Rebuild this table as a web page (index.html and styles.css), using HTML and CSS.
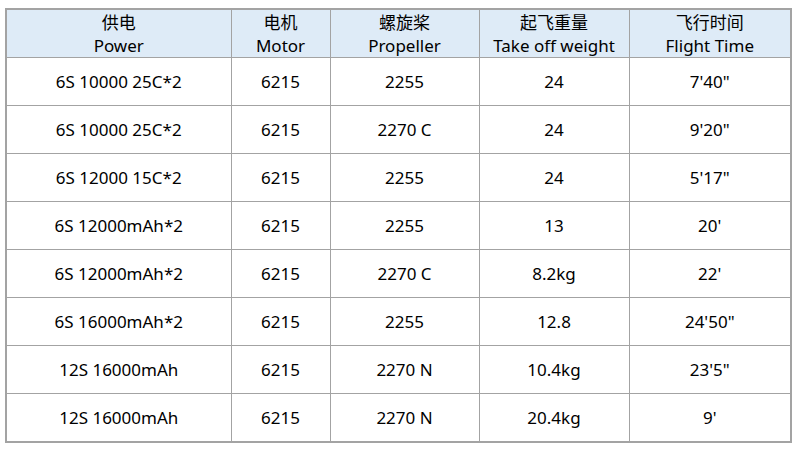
FILE: index.html
```html
<!DOCTYPE html>
<html>
<head>
<meta charset="utf-8">
<link rel="stylesheet" href="styles.css">
</head>
<body>
<table class="spec">
  <colgroup>
    <col class="c1"><col class="c2"><col class="c3"><col class="c4"><col class="c5">
  </colgroup>
  <thead>
    <tr>
      <th>供电<br>Power</th>
      <th>电机<br>Motor</th>
      <th>螺旋桨<br>Propeller</th>
      <th>起飞重量<br>Take off weight</th>
      <th>飞行时间<br>Flight Time</th>
    </tr>
  </thead>
  <tbody>
    <tr><td>6S 10000 25C*2</td><td>6215</td><td>2255</td><td>24</td><td>7'40"</td></tr>
    <tr><td>6S 10000 25C*2</td><td>6215</td><td>2270 C</td><td>24</td><td>9'20"</td></tr>
    <tr><td>6S 12000 15C*2</td><td>6215</td><td>2255</td><td>24</td><td>5'17"</td></tr>
    <tr><td>6S 12000mAh*2</td><td>6215</td><td>2255</td><td>13</td><td>20'</td></tr>
    <tr><td>6S 12000mAh*2</td><td>6215</td><td>2270 C</td><td>8.2kg</td><td>22'</td></tr>
    <tr><td>6S 16000mAh*2</td><td>6215</td><td>2255</td><td>12.8</td><td>24'50"</td></tr>
    <tr><td>12S 16000mAh</td><td>6215</td><td>2270 N</td><td>10.4kg</td><td>23'5"</td></tr>
    <tr><td>12S 16000mAh</td><td>6215</td><td>2270 N</td><td>20.4kg</td><td>9'</td></tr>
  </tbody>
</table>
</body>
</html>
```
FILE: styles.css
```css
html, body {
  margin: 0;
  background: #ffffff;
}
body {
  padding: 8px 0 0 5px;
  font-family: "Noto Sans", "Open Sans", "Noto Sans CJK SC", sans-serif;
  font-size: 17px;
  color: #000000;
}
.spec {
  border-collapse: collapse;
  table-layout: fixed;
  width: 785px;
  border: 2px solid #a3a3a3;
}
.c1 { width: 225px; }
.c2 { width: 99px; }
.c3 { width: 149px; }
.c4 { width: 150px; }
.c5 { width: 162px; }
.spec th, .spec td {
  border: 1px solid #a3a3a3;
  text-align: center;
  vertical-align: middle;
  padding: 0;
  height: 47px;
  font-weight: normal;
}
.spec th {
  background: #deebf7;
  line-height: 23px;
  font-family: "Noto Sans", "Noto Sans CJK SC", sans-serif;
}
.spec td {
  line-height: 20px;
}
```
